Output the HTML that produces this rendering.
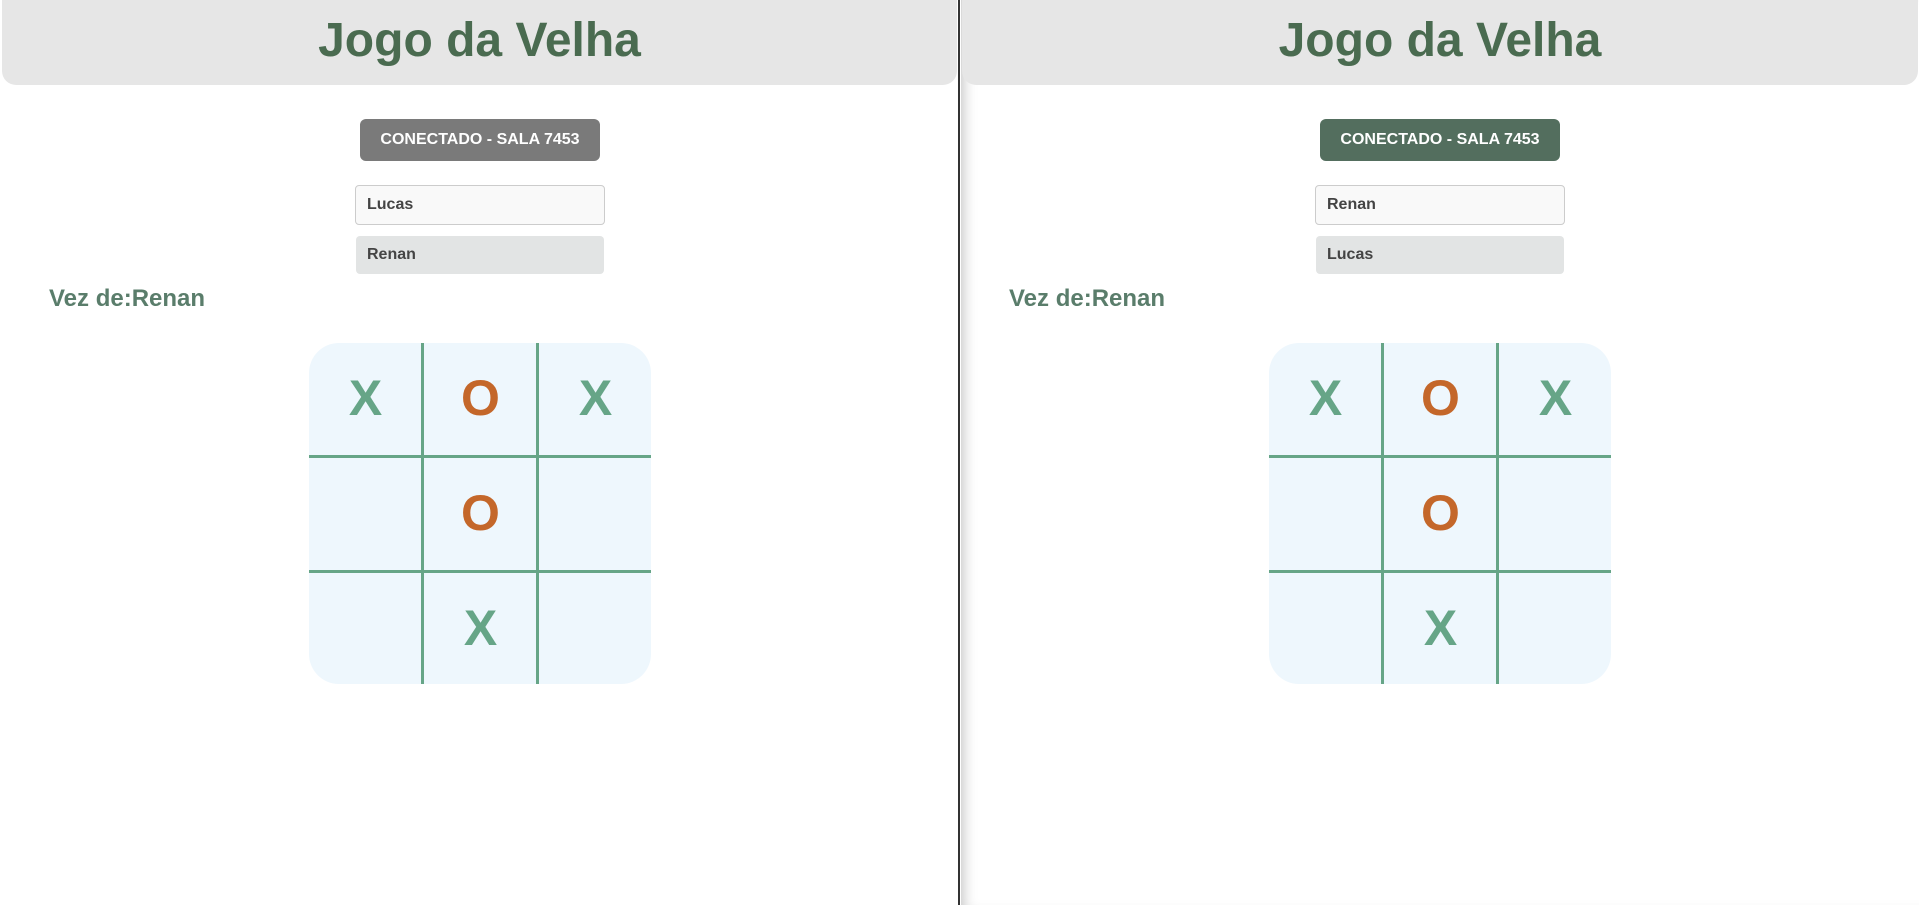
<!DOCTYPE html>
<html><head><meta charset="utf-8"><style>
*{margin:0;padding:0;box-sizing:border-box}
body{width:1919px;height:905px;background:#fff;position:relative;overflow:hidden;font-family:"Liberation Sans",Arial,sans-serif}
.p{position:absolute;top:0;height:905px;background:#fff}
.hdr{position:absolute;left:2px;top:0;width:955px;height:85px;background:#e6e6e6;border-radius:0 0 14px 14px;text-align:center;color:#4a6b50;font-weight:bold;font-size:48px;line-height:81px}
.btn{position:absolute;left:360px;top:119px;width:240px;height:42px;border-radius:6px;color:#fff;font-weight:bold;font-size:16px;line-height:42px;text-align:center}
.in{position:absolute;left:355px;width:250px;font-weight:bold;font-size:16px;color:#444;padding-left:11px;border-radius:4px}
.i1{top:185px;height:40px;line-height:38px;background:#f9f9f9;border:1px solid #ccc}
.i2{top:236px;height:38px;line-height:38px;background:#e2e4e4;left:356px;width:248px}
.vez{position:absolute;left:49px;top:285px;font-size:24px;font-weight:bold;color:#5a7d6b}
.board{position:absolute;left:309px;top:343px;width:342px;height:341px;background:#eef7fd;border-radius:30px;overflow:hidden}
.vl,.hl{position:absolute;background:#66a587}
.vl{top:0;width:3px;height:341px}
.hl{left:0;height:3px;width:342px}
.c{position:absolute;width:113px;height:113px;text-align:center;line-height:111px;font-weight:bold;font-size:50px}
.x{color:#66a587}.o{color:#c4672a}
</style></head><body>
<div style="position:absolute;left:0;top:0;width:2px;height:905px;background:#5a5a3a"></div>
<div class="p" style="left:0;width:959px">
<div class="hdr">Jogo da Velha</div>
<div class="btn" style="background:#7a7a7a">CONECTADO - SALA 7453</div>
<div class="in i1">Lucas</div>
<div class="in i2">Renan</div>
<div class="vez">Vez de:Renan</div>
<div class="board">
<div class="vl" style="left:112px"></div><div class="vl" style="left:227px"></div>
<div class="hl" style="top:112px"></div><div class="hl" style="top:227px"></div>
<div class="c x" style="left:0;top:0">X</div><div class="c o" style="left:115px;top:0">O</div><div class="c x" style="left:230px;top:0">X</div>
<div class="c o" style="left:115px;top:115px">O</div>
<div class="c x" style="left:115px;top:230px">X</div>
</div>
</div>
<div style="position:absolute;left:958px;top:0;width:2px;height:905px;background:#333"></div>
<div class="p" style="left:961px;width:958px;box-shadow:inset 12px 0 14px -10px rgba(0,0,0,0.25)">
<div class="hdr" style="left:1px;width:956px">Jogo da Velha</div>
<div class="btn" style="background:#536e5e;left:359px">CONECTADO - SALA 7453</div>
<div class="in i1" style="left:354px">Renan</div>
<div class="in i2" style="left:355px">Lucas</div>
<div class="vez" style="left:48px">Vez de:Renan</div>
<div class="board" style="left:308px">
<div class="vl" style="left:112px"></div><div class="vl" style="left:227px"></div>
<div class="hl" style="top:112px"></div><div class="hl" style="top:227px"></div>
<div class="c x" style="left:0;top:0">X</div><div class="c o" style="left:115px;top:0">O</div><div class="c x" style="left:230px;top:0">X</div>
<div class="c o" style="left:115px;top:115px">O</div>
<div class="c x" style="left:115px;top:230px">X</div>
</div>
</div>
</body></html>
